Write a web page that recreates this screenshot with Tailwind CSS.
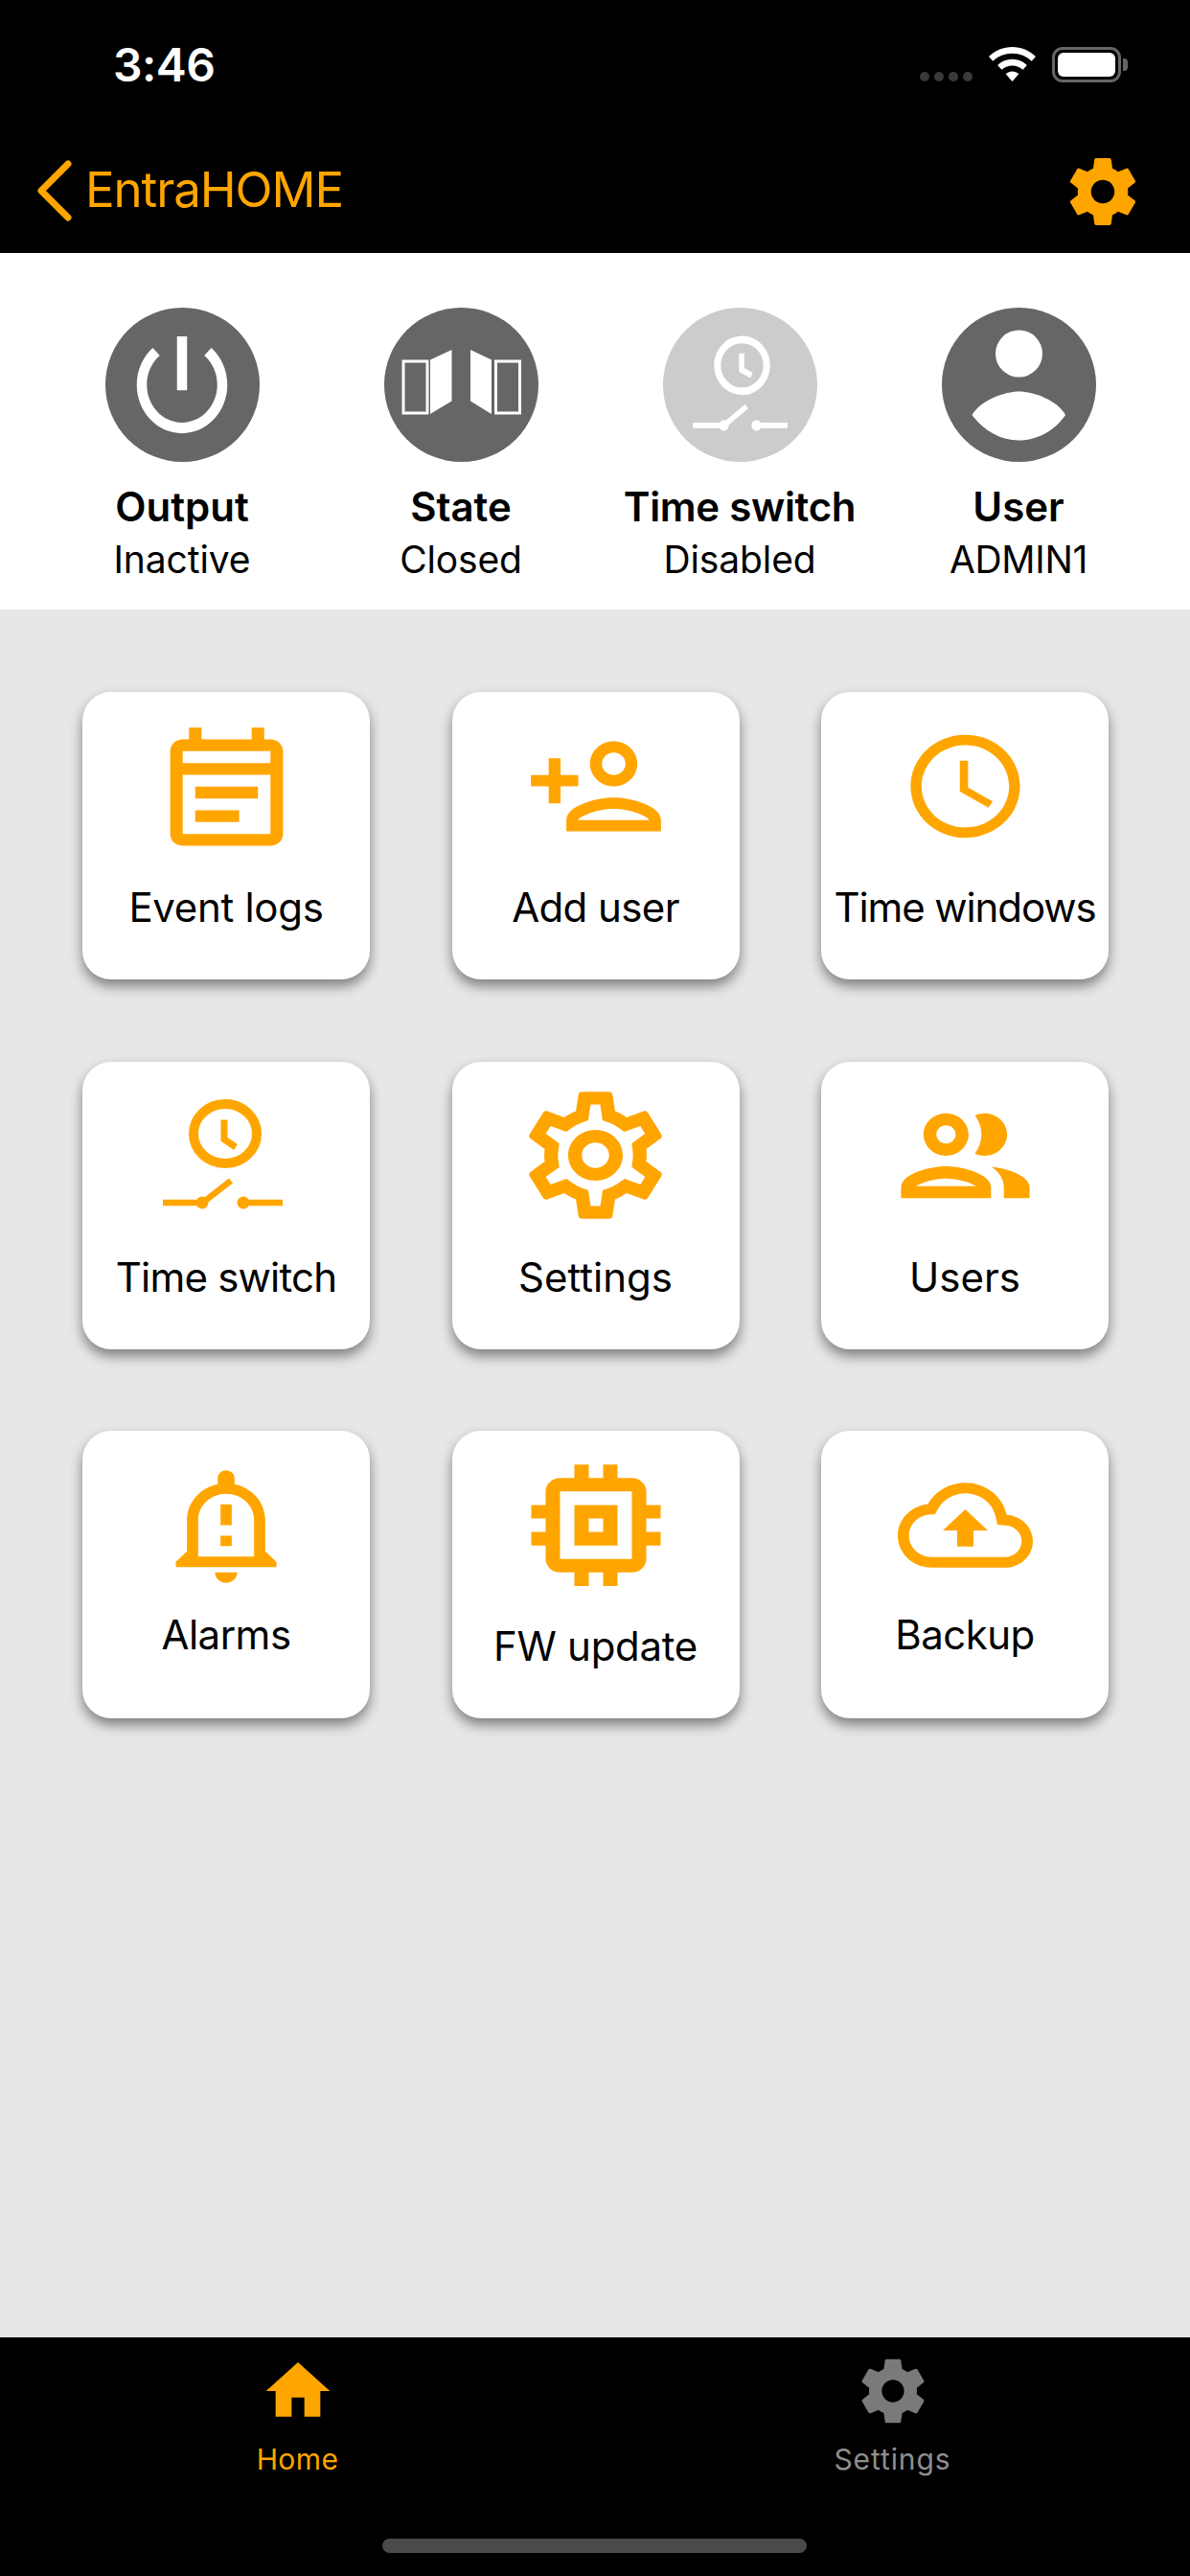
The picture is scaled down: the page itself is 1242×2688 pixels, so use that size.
<!DOCTYPE html>
<html>
<head>
  <title>EntraHOME</title>
  <script src="https://cdn.jsdelivr.net/npm/@tailwindcss/browser@4"></script>
</head>
<body class="font-['Inter',sans-serif] bg-[#e7e7e7] text-black">
<div class="w-[1242px] h-[2688px] flex flex-col overflow-hidden">

  <!-- Status bar + nav bar -->
  <div class="h-[264px] shrink-0 bg-black relative">
    <div class="absolute left-[118px] top-[39px] text-white text-[48px] leading-[58px] font-semibold tracking-[-0.5px]">3:46</div>
    <div class="absolute left-[960px] top-[75px] flex gap-[5px]">
      <span class="w-[10px] h-[10px] rounded-full bg-[#3a3a3a]"></span>
      <span class="w-[10px] h-[10px] rounded-full bg-[#3a3a3a]"></span>
      <span class="w-[10px] h-[10px] rounded-full bg-[#3a3a3a]"></span>
      <span class="w-[10px] h-[10px] rounded-full bg-[#3a3a3a]"></span>
    </div>
    <svg class="absolute left-[1032px] top-[49px]" width="49" height="36" viewBox="0 0 51 38" preserveAspectRatio="none" fill="white">
      <path d="M25.500 0C35 0 44 3.800 51 10.500L46.500 15.500C40.800 10 33.500 7 25.500 7S10.200 10 4.500 15.500L0 10.500C7 3.800 16 0 25.500 0Z"/>
      <path d="M25.500 13.500C31.500 13.500 37 15.800 41.500 20L37 25C34 22.200 30 20.500 25.500 20.500S17 22.200 14 25L9.500 20C14 15.800 19.500 13.500 25.500 13.500Z"/>
      <path d="M25.500 27C28 27 30.500 28 32.500 29.800L25.500 38L18.500 29.800C20.500 28 23 27 25.500 27Z"/>
    </svg>
    <div class="absolute left-[1098px] top-[49px] w-[72px] h-[37px] rounded-[11px] border-[3px] border-[#666666] p-[3px]">
      <div class="w-full h-full rounded-[6px] bg-white"></div>
    </div>
    <div class="absolute left-[1172px] top-[61px] w-[5px] h-[13px] rounded-r-[4px] bg-[#666666]"></div>

    <div class="absolute left-[37px] top-[158px] right-[49px] flex items-center justify-between">
      <div class="flex items-center gap-[10px]">
        <svg class="mb-[3px]" width="42" height="66" viewBox="0 0 42 66" fill="none" stroke="#ffa500" stroke-width="7" stroke-linecap="round" stroke-linejoin="round"><path d="M34 5L6 33L34 61"/></svg>
        <span class="mb-[4px] text-[#ffa500] text-[51px] leading-[62px] tracking-[-1.1px]">EntraHOME</span>
      </div>
      <svg width="84" height="84" viewBox="0 0 24 24" fill="#ffa500"><path d="M19.430 12.980c.04-.32.07-.64.07-.98s-.03-.66-.07-.98l2.110-1.650c.19-.15.24-.42.12-.64l-2-3.460c-.12-.22-.39-.3-.61-.22l-2.490 1c-.52-.4-1.080-.73-1.690-.98l-.38-2.650C14.460 2.180 14.250 2 14 2h-4c-.25 0-.46.18-.49.42l-.38 2.650c-.61.25-1.170.59-1.690.98l-2.490-1c-.23-.09-.49 0-.61.22l-2 3.460c-.13.22-.07.49.12.64l2.110 1.650c-.04.32-.07.65-.07.98s.03.66.07.98l-2.110 1.650c-.19.15-.24.42-.12.64l2 3.460c.12.22.39.3.61.22l2.490-1c.52.4 1.080.73 1.690.98l.38 2.650c.03.24.24.42.49.42h4c.25 0 .46-.18.49-.42l.38-2.650c.61-.25 1.170-.59 1.690-.98l2.490 1c.23.09.49 0 .61-.22l2-3.460c.12-.22.07-.49-.12-.64l-2.110-1.650zM12 15.500c-1.930 0-3.500-1.570-3.500-3.500s1.570-3.500 3.500-3.500 3.500 1.570 3.500 3.500-1.570 3.500-3.500 3.500z"/></svg>
    </div>
  </div>

  <!-- Status strip -->
  <div class="h-[372px] shrink-0 bg-white pt-[57px] pl-[44.5px] grid grid-cols-[repeat(4,291px)]">
    <div class="flex flex-col items-center">
      <div class="w-[161px] h-[161px] rounded-full bg-[#666666] flex items-center justify-center">
        <svg width="126" height="135" viewBox="0 0 24 24" preserveAspectRatio="none" fill="white"><path d="M13 3h-2v10h2V3zm4.830 2.170l-1.420 1.420C17.990 7.860 19 9.810 19 12c0 3.870-3.130 7-7 7s-7-3.130-7-7c0-2.190 1.010-4.140 2.580-5.420L6.170 5.170C4.230 6.820 3 9.260 3 12c0 4.970 4.030 9 9 9s9-4.030 9-9c0-2.740-1.230-5.180-3.170-6.830z"/></svg>
      </div>
      <div class="mt-[22px] text-[42px] leading-[50px] font-semibold">Output</div>
      <div class="mt-[6px] text-[39px] leading-[47px] tracking-[-0.1px]">Inactive</div>
    </div>
    <div class="flex flex-col items-center">
      <div class="w-[161px] h-[161px] rounded-full bg-[#666666]">
        <svg width="161" height="161" viewBox="0 0 161 161" fill="white">
          <rect x="20" y="56" width="25" height="54" fill="none" stroke="white" stroke-width="3"/>
          <path d="M48 54.500L70.500 44V97.500L48 111Z"/>
          <path d="M90 44L112 54.500V111L90 97.500Z"/>
          <rect x="116.500" y="56" width="25" height="54" fill="none" stroke="white" stroke-width="3"/>
        </svg>
      </div>
      <div class="mt-[22px] text-[42px] leading-[50px] font-semibold">State</div>
      <div class="mt-[6px] text-[39px] leading-[47px] tracking-[-0.2px]">Closed</div>
    </div>
    <div class="flex flex-col items-center">
      <div class="w-[161px] h-[161px] rounded-full bg-[#cccccc] flex items-center justify-center">
        <svg width="99" height="100" viewBox="0 0 125 115" preserveAspectRatio="none" fill="white" stroke="white" class="mt-[-3px]">
          <ellipse cx="65" cy="36" rx="32.500" ry="31" fill="none" stroke-width="9"/>
          <path d="M64.500 21.500V41.500L77.500 48" fill="none" stroke-width="7"/>
          <path d="M0 108H40M44 106L71 85M85 108H125" fill="none" stroke-width="6.500"/>
          <circle cx="41" cy="108" r="6.500" stroke="none"/>
          <circle cx="84" cy="108" r="6.500" stroke="none"/>
        </svg>
      </div>
      <div class="mt-[22px] text-[42px] leading-[50px] font-semibold tracking-[-0.3px]">Time switch</div>
      <div class="mt-[6px] text-[39px] leading-[47px] tracking-[-0.1px]">Disabled</div>
    </div>
    <div class="flex flex-col items-center">
      <div class="w-[161px] h-[161px] rounded-full bg-[#666666]">
        <svg width="161" height="161" viewBox="0 0 161 161" fill="white">
          <ellipse cx="80.500" cy="48" rx="24.500" ry="24.500"/>
          <path d="M31.500 112C40 97 65 87.500 80.500 87.500C96 87.500 121 97 129 112C118 128 100 138.500 80.500 138.500C61 138.500 43 128 31.500 112Z"/>
        </svg>
      </div>
      <div class="mt-[22px] text-[42px] leading-[50px] font-semibold">User</div>
      <div class="mt-[6px] text-[39px] leading-[47px] tracking-[-0.3px]">ADMIN1</div>
    </div>
  </div>

  <!-- Menu tiles -->
  <div class="flex-1 pt-[86px] pl-[86px] grid grid-cols-[repeat(3,300px)] auto-rows-[300px] gap-x-[85.5px] gap-y-[85.5px] content-start">

    <div class="bg-white rounded-[30px] shadow-[0_7px_13px_rgba(0,0,0,0.45)] flex flex-col items-center">
      <div class="h-[196px] flex items-center justify-center">
        <svg class="mt-[14px]" width="157" height="148" viewBox="0 0 24 24" preserveAspectRatio="none" fill="#ffa500"><path fill-rule="evenodd" d="M19 3h-1V1h-2v2H8V1H6v2H5c-1.100 0-2 .9-2 2v14c0 1.100.9 2 2 2h14c1.100 0 2-.9 2-2V5c0-1.100-.9-2-2-2zm0 16H5V9h14v10zM5 7V5h14v2H5zm2 4h10v2H7zm0 4h7v2H7z"/></svg>
      </div>
      <div class="mt-[4px] text-[42px] leading-[50px] tracking-[-0.3px]">Event logs</div>
    </div>

    <div class="bg-white rounded-[30px] shadow-[0_7px_13px_rgba(0,0,0,0.45)] flex flex-col items-center">
      <div class="h-[196px] flex items-center justify-center">
        <svg width="148" height="141" viewBox="0 0 24 24" preserveAspectRatio="none" fill="#ffa500"><path d="M15 12c2.210 0 4-1.790 4-4s-1.790-4-4-4-4 1.790-4 4 1.790 4 4 4zm0-6c1.100 0 2 .9 2 2s-.9 2-2 2-2-.9-2-2 .9-2 2-2zm0 8c-2.670 0-8 1.340-8 4v2h16v-2c0-2.660-5.330-4-8-4zm-6 4c.22-.72 3.310-2 6-2 2.700 0 5.800 1.290 6 2H9zm-3-3v-3h3v-2H6V7H4v3H1v2h3v3z"/></svg>
      </div>
      <div class="mt-[4px] text-[42px] leading-[50px] tracking-[-0.6px]">Add user</div>
    </div>

    <div class="bg-white rounded-[30px] shadow-[0_7px_13px_rgba(0,0,0,0.45)] flex flex-col items-center">
      <div class="h-[196px] flex items-center justify-center">
        <svg width="137" height="129" viewBox="0 0 24 24" preserveAspectRatio="none" fill="#ffa500"><path d="M11.990 2C6.470 2 2 6.480 2 12s4.470 10 9.990 10C17.520 22 22 17.520 22 12S17.520 2 11.990 2zM12 20c-4.420 0-8-3.580-8-8s3.580-8 8-8 8 3.580 8 8-3.580 8-8 8zm.5-13H11v6l5.250 3.150.75-1.230-4.500-2.670z"/></svg>
      </div>
      <div class="mt-[4px] text-[42px] leading-[50px] tracking-[-1.1px]">Time windows</div>
    </div>

    <div class="bg-white rounded-[30px] shadow-[0_7px_13px_rgba(0,0,0,0.45)] flex flex-col items-center">
      <div class="h-[196px] flex items-center justify-center">
        <svg width="125" height="115" viewBox="0 0 125 115" fill="#ffa500" stroke="#ffa500" class="mt-[-3px] ml-[-8px]">
          <ellipse cx="65" cy="36" rx="33" ry="31" fill="none" stroke-width="10"/>
          <path d="M64 21.500V42L76 50" fill="none" stroke-width="7"/>
          <path d="M0 108H40M44 106L71 85M85 108H125" fill="none" stroke-width="6.500"/>
          <circle cx="41" cy="108" r="6.500" stroke="none"/>
          <circle cx="84" cy="108" r="6.500" stroke="none"/>
        </svg>
      </div>
      <div class="mt-[4px] text-[42px] leading-[50px] tracking-[-0.8px]">Time switch</div>
    </div>

    <div class="bg-white rounded-[30px] shadow-[0_7px_13px_rgba(0,0,0,0.45)] flex flex-col items-center">
      <div class="h-[196px] flex items-center justify-center">
        <svg width="171" height="159" viewBox="0 0 24 24" preserveAspectRatio="none" fill="#ffa500"><path d="M19.430 12.980c.04-.32.07-.64.07-.98 0-.34-.03-.66-.07-.98l2.110-1.650c.19-.15.24-.42.12-.64l-2-3.460c-.09-.16-.26-.25-.44-.25-.06 0-.12.01-.17.03l-2.490 1c-.52-.4-1.080-.73-1.690-.98l-.38-2.650C14.460 2.180 14.250 2 14 2h-4c-.25 0-.46.18-.49.42l-.38 2.650c-.61.25-1.170.59-1.690.98l-2.490-1c-.06-.02-.12-.03-.18-.03-.17 0-.34.09-.43.25l-2 3.460c-.13.22-.07.49.12.64l2.110 1.650c-.04.32-.07.65-.07.98 0 .33.03.66.07.98l-2.110 1.650c-.19.15-.24.42-.12.64l2 3.460c.09.16.26.25.44.25.06 0 .12-.01.17-.03l2.490-1c.52.4 1.080.73 1.690.98l.38 2.650c.03.24.24.42.49.42h4c.25 0 .46-.18.49-.42l.38-2.650c.61-.25 1.170-.59 1.690-.98l2.490 1c.06.02.12.03.18.03.17 0 .34-.09.43-.25l2-3.460c.12-.22.07-.49-.12-.64l-2.110-1.650zm-1.980-1.710c.04.31.05.52.05.73 0 .21-.02.43-.05.73l-.14 1.130.89.7 1.080.84-.7 1.210-1.270-.51-1.040-.42-.9.68c-.43.32-.84.56-1.250.73l-1.060.43-.16 1.130-.2 1.350h-1.400l-.19-1.350-.16-1.130-1.060-.43c-.43-.18-.83-.41-1.230-.71l-.91-.7-1.060.43-1.270.51-.7-1.210 1.080-.84.89-.7-.14-1.130c-.03-.31-.05-.54-.05-.74s.02-.43.05-.73l.14-1.130-.89-.7-1.080-.84.7-1.210 1.270.51 1.040.42.9-.68c.43-.32.84-.56 1.250-.73l1.060-.43.16-1.130.2-1.350h1.390l.19 1.350.16 1.130 1.060.43c.43.18.83.41 1.230.71l.91.7 1.060-.43 1.270-.51.7 1.210-1.070.85-.89.7.14 1.130zM12 8c-2.210 0-4 1.790-4 4s1.790 4 4 4 4-1.790 4-4-1.790-4-4-4zm0 6c-1.100 0-2-.9-2-2s.9-2 2-2 2 .9 2 2-.9 2-2 2z"/></svg>
      </div>
      <div class="mt-[4px] text-[42px] leading-[50px]">Settings</div>
    </div>

    <div class="bg-white rounded-[30px] shadow-[0_7px_13px_rgba(0,0,0,0.45)] flex flex-col items-center">
      <div class="h-[196px] flex items-center justify-center">
        <svg width="161" height="152" viewBox="0 0 24 24" preserveAspectRatio="none" fill="#ffa500"><path d="M9 13.750c-2.340 0-7 1.170-7 3.500V19h14v-1.750c0-2.330-4.660-3.500-7-3.500zM4.340 17c.84-.58 2.870-1.250 4.660-1.250s3.820.67 4.660 1.250H4.340zM9 12c1.930 0 3.500-1.570 3.500-3.500S10.930 5 9 5 5.500 6.570 5.500 8.500 7.070 12 9 12zm0-5c.83 0 1.500.67 1.500 1.500S9.830 10 9 10s-1.500-.67-1.500-1.500S8.170 7 9 7zm7.040 6.810c1.160.84 1.960 1.960 1.960 3.440V19h4v-1.750c0-2.020-3.500-3.170-5.960-3.440zM15 12c1.930 0 3.500-1.570 3.500-3.500S16.930 5 15 5c-.54 0-1.040.13-1.500.35.63.89 1 1.980 1 3.150s-.37 2.260-1 3.150c.46.22.96.35 1.500.35z"/></svg>
      </div>
      <div class="mt-[4px] text-[42px] leading-[50px]">Users</div>
    </div>

    <div class="bg-white rounded-[30px] shadow-[0_7px_13px_rgba(0,0,0,0.45)] flex flex-col items-center">
      <div class="h-[196px] flex items-center justify-center">
        <svg width="140" height="131" viewBox="0 0 24 24" preserveAspectRatio="none" fill="#ffa500"><path d="M10.010 21.010c0 1.100.89 1.990 1.990 1.990s1.990-.89 1.990-1.990h-3.980zM12 6c2.760 0 5 2.240 5 5v7H7v-7c0-2.760 2.240-5 5-5zm0-4.500c-.83 0-1.500.67-1.500 1.500v1.170C7.360 4.850 5 7.650 5 11v6l-2 2v1h18v-1l-2-2v-6c0-3.350-2.360-6.150-5.500-6.830V3c0-.83-.67-1.500-1.500-1.500zM11 8h2v4h-2zm0 6h2v2h-2z"/></svg>
      </div>
      <div class="mt-[-8px] text-[42px] leading-[50px] tracking-[-0.5px]">Alarms</div>
    </div>

    <div class="bg-white rounded-[30px] shadow-[0_7px_13px_rgba(0,0,0,0.45)] flex flex-col items-center">
      <div class="h-[196px] flex items-center justify-center">
        <svg width="180" height="169" viewBox="0 0 24 24" preserveAspectRatio="none" fill="#ffa500"><path d="M15 9H9v6h6V9zm-2 4h-2v-2h2v2zm8-2V9h-2V7c0-1.100-.9-2-2-2h-2V3h-2v2h-2V3H9v2H7c-1.100 0-2 .9-2 2v2H3v2h2v2H3v2h2v2c0 1.100.9 2 2 2h2v2h2v-2h2v2h2v-2h2c1.100 0 2-.9 2-2v-2h2v-2h-2v-2h2zm-4 6H7V7h10v10z"/></svg>
      </div>
      <div class="mt-[4px] text-[42px] leading-[50px] tracking-[-0.3px]">FW update</div>
    </div>

    <div class="bg-white rounded-[30px] shadow-[0_7px_13px_rgba(0,0,0,0.45)] flex flex-col items-center">
      <div class="h-[196px] flex items-center justify-center">
        <svg width="141" height="133" viewBox="0 0 24 24" preserveAspectRatio="none" fill="#ffa500"><path d="M19.350 10.040C18.670 6.590 15.640 4 12 4 9.110 4 6.600 5.640 5.350 8.040 2.340 8.360 0 10.910 0 14c0 3.310 2.690 6 6 6h13c2.760 0 5-2.240 5-5 0-2.640-2.050-4.780-4.650-4.960zM19 18H6c-2.210 0-4-1.790-4-4 0-2.050 1.530-3.760 3.560-3.970l1.070-.11.5-.95C8.080 7.140 9.940 6 12 6c2.620 0 4.880 1.860 5.390 4.430l.3 1.500 1.530.11c1.560.1 2.780 1.410 2.780 2.960 0 1.650-1.350 3-3 3zM8 13h2.550v3h2.900v-3H16l-4-4z"/></svg>
      </div>
      <div class="mt-[-8px] text-[42px] leading-[50px] tracking-[-0.5px]">Backup</div>
    </div>
  </div>

  <!-- Tab bar -->
  <div class="h-[249px] shrink-0 bg-black relative grid grid-cols-2 pt-[16px]">
    <div class="flex flex-col items-center text-[#ffa500]">
      <svg width="80" height="80" viewBox="0 0 24 24" fill="#ffa500"><path d="M10 20v-6h4v6h5v-8h3L12 3 2 12h3v8z"/></svg>
      <div class="mt-[13px] text-[30px] leading-[36px] tracking-[0.4px]">Home</div>
    </div>
    <div class="flex flex-col items-center text-[#8e8e8e]">
      <svg width="80" height="80" viewBox="0 0 24 24" fill="#7a7a7a"><path d="M19.430 12.980c.04-.32.07-.64.07-.98s-.03-.66-.07-.98l2.110-1.650c.19-.15.24-.42.12-.64l-2-3.460c-.12-.22-.39-.3-.61-.22l-2.490 1c-.52-.4-1.080-.73-1.690-.98l-.38-2.650C14.460 2.180 14.250 2 14 2h-4c-.25 0-.46.18-.49.42l-.38 2.650c-.61.25-1.170.59-1.690.98l-2.490-1c-.23-.09-.49 0-.61.22l-2 3.460c-.13.22-.07.49.12.64l2.110 1.650c-.04.32-.07.65-.07.98s.03.66.07.98l-2.110 1.650c-.19.15-.24.42-.12.64l2 3.460c.12.22.39.3.61.22l2.490-1c.52.4 1.080.73 1.690.98l.38 2.650c.03.24.24.42.49.42h4c.25 0 .46-.18.49-.42l.38-2.650c.61-.25 1.170-.59 1.690-.98l2.490 1c.23.09.49 0 .61-.22l2-3.460c.12-.22.07-.49-.12-.64l-2.110-1.650zM12 15.500c-1.930 0-3.500-1.570-3.500-3.500s1.570-3.500 3.500-3.500 3.500 1.570 3.500 3.500-1.570 3.500-3.500 3.500z"/></svg>
      <div class="mt-[13px] text-[30px] leading-[36px] tracking-[0.9px]">Settings</div>
    </div>
    <div class="absolute left-[399px] top-[210px] w-[443px] h-[15px] rounded-full bg-[#4a4a4a]"></div>
  </div>
</div>
</body>
</html>
